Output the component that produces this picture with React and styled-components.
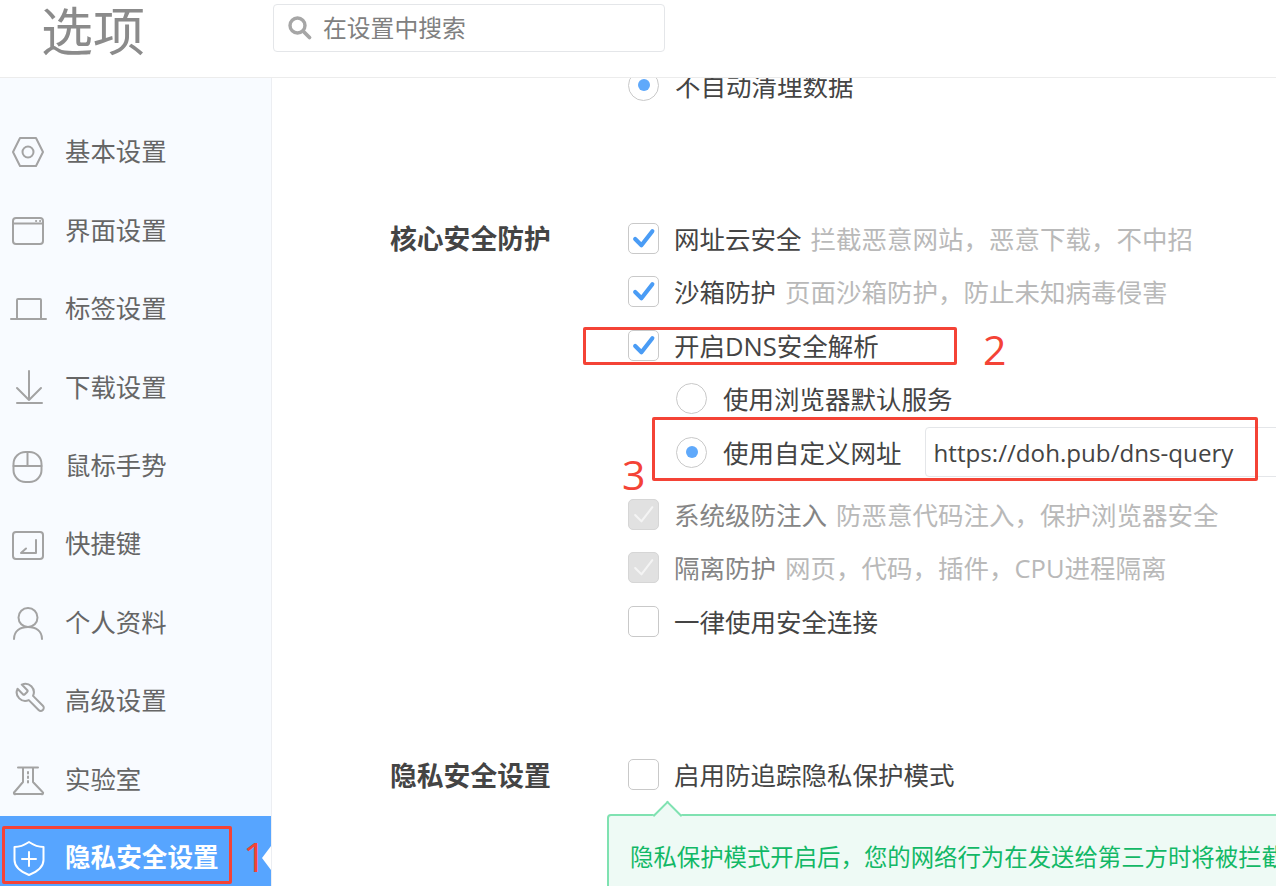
import React from "react";
import styled, { createGlobalStyle } from "styled-components";

const Global = createGlobalStyle`
  html, body { margin: 0; padding: 0; background: #fff; }
  body { font-family: "Open Sans", "Noto Sans CJK SC", sans-serif; }
  * { box-sizing: border-box; }
`;

const COMMA = "\uFF0C";

const Page = styled.div`
  position: relative;
  width: 1276px;
  height: 886px;
  overflow: hidden;
  display: flex;
  flex-direction: column;
`;

const Header = styled.header`
  height: 78px;
  flex: none;
  display: flex;
  align-items: flex-start;
  border-bottom: 1px solid #ececec;
`;

const Title = styled.h1`
  width: 273px;
  flex: none;
  margin: 0;
  padding-left: 41px;
  font-size: 52px;
  line-height: 62px;
  font-weight: 400;
  color: #8b8b8b;
`;

const Search = styled.div`
  margin-top: 4px;
  width: 392px;
  height: 48px;
  display: flex;
  align-items: center;
  gap: 10px;
  padding: 2px 0 0 13px;
  border: 1px solid #e4e6e9;
  border-radius: 4px;
  font-size: 23.8px;
  line-height: 1;
  color: #808080;

  svg {
    margin-bottom: 2px;
  }
`;

const Body = styled.div`
  flex: 1;
  min-height: 0;
  display: flex;
`;

const Sidebar = styled.nav`
  width: 272px;
  flex: none;
  padding-top: 35px;
  background: #f8fbff;
  border-right: 1px solid #eceef2;
  overflow: hidden;
`;

const NavItem = styled.div`
  position: relative;
  height: ${(p) => (p.$active ? "84px" : "78.4px")};
  margin-top: ${(p) => (p.$active ? "-2.4px" : "0")};
  display: flex;
  align-items: center;
  gap: 17px;
  padding-left: 8px;
  font-size: ${(p) => (p.$active ? "25.6px" : "25.4px")};
  line-height: 1;
  font-weight: ${(p) => (p.$active ? 700 : 400)};
  color: ${(p) => (p.$active ? "#fff" : "#666")};
  background: ${(p) => (p.$active ? "#57a5ff" : "transparent")};

  ${(p) =>
    p.$active &&
    `&::after {
      content: "";
      position: absolute;
      right: 0;
      top: 30px;
      border: 12px solid transparent;
      border-left-width: 0;
      border-right: 9px solid #fff;
    }`}
`;

const IconSvg = styled.svg`
  width: 40px;
  height: 40px;
  flex: none;
  fill: none;
  stroke: ${(p) => p.$color || "#a3a3a3"};
  stroke-width: 2;
  stroke-linecap: round;
  stroke-linejoin: round;
`;

const Main = styled.main`
  flex: 1;
  min-width: 0;
  overflow: hidden;
  padding-left: 118px;
`;

const Scrolled = styled.div`
  margin-top: -19.7px;
`;

const Section = styled.section`
  display: grid;
  grid-template-columns: 238px 1fr;
  margin-bottom: ${(p) => p.$after || "0"};
`;

const SectionName = styled.h2`
  margin: 0;
  height: 53.5px;
  padding-top: 3px;
  display: flex;
  align-items: center;
  font-size: 26.8px;
  line-height: 1;
  font-weight: 700;
  color: #444;
  white-space: nowrap;
`;

const Options = styled.div`
  min-width: 0;
`;

const Row = styled.div`
  height: 53.5px;
  padding: 3px 0 0 ${(p) => (p.$sub ? "48px" : "0")};
  display: flex;
  align-items: center;
  margin-bottom: ${(p) => (p.$gap ? "8.5px" : "0")};
  font-size: 25.5px;
  line-height: 1;
  color: ${(p) => (p.$muted ? "#858585" : "#444")};
  white-space: nowrap;
`;

const Box = styled.span`
  width: 31px;
  height: 31px;
  flex: none;
  margin: 0 15px 3px 0;
  display: flex;
  align-items: center;
  justify-content: center;
  border: 1px solid ${(p) => (p.$disabled ? "#d6d6d6" : "#c9c9c9")};
  border-radius: 5px;
  background: ${(p) => (p.$disabled ? "#e1e1e1" : "#fff")};
`;

const CheckMark = styled.svg`
  width: 25px;
  height: 25px;
  fill: none;
  stroke: ${(p) => (p.$disabled ? "#f4f4f4" : "#4a9cf5")};
  stroke-width: ${(p) => (p.$disabled ? 2 : 4)};
  stroke-linecap: round;
  stroke-linejoin: round;
`;

const Radio = styled.span`
  width: 31px;
  height: 31px;
  flex: none;
  margin: 0 16px 3px 0;
  display: flex;
  align-items: center;
  justify-content: center;
  border: 1px solid #c9c9c9;
  border-radius: 50%;
  background: #fff;

  &::after {
    content: "";
    width: 12px;
    height: 12px;
    border-radius: 50%;
    background: ${(p) => (p.$on ? "#5fa9fb" : "transparent")};
  }
`;

const Hint = styled.span`
  margin-left: 9px;
  color: #b9b9b9;
`;

const UrlInput = styled.div`
  flex: none;
  margin: 0 0 3px 23px;
  width: 420px;
  height: 50px;
  display: flex;
  align-items: center;
  padding: 2px 0 0 8px;
  border: 1px solid #e4e6e9;
  border-radius: 4px;
  font-size: 24.15px;
  color: #444;
`;

const Tip = styled.div`
  position: relative;
  margin: 13px 0 0 -21px;
  width: 800px;
  height: 120px;
  padding: 21px 21px;
  border: 2px solid #7fe2b1;
  border-radius: 4px;
  background: #eefaf5;
  font-size: 23.4px;
  line-height: 40px;
  color: #12b866;
  white-space: nowrap;

  &::before {
    content: "";
    position: absolute;
    left: 48px;
    top: -11px;
    width: 19px;
    height: 19px;
    transform: rotate(45deg);
    background: #eefaf5;
    border-top: 2px solid #7fe2b1;
    border-left: 2px solid #7fe2b1;
  }
`;

const Mark = styled.div`
  position: absolute;
  left: ${(p) => p.$l}px;
  top: ${(p) => p.$t}px;
  width: ${(p) => p.$w}px;
  height: ${(p) => p.$h}px;
  border: 3px solid #f44336;
  border-radius: 2px;
  pointer-events: none;
`;

const MarkNumber = styled.span`
  position: absolute;
  left: ${(p) => p.$l}px;
  top: ${(p) => p.$t}px;
  font-family: "Open Sans", sans-serif;
  font-weight: 400;
  font-size: 41px;
  line-height: 42px;
  color: #f44336;
`;

const icons = {
  hex: (
    <>
      <path d="M5 20 12 6h16l7 14-7 14H12z" />
      <circle cx="20" cy="20" r="5.5" />
    </>
  ),
  window: (
    <>
      <rect x="5" y="7" width="30" height="26" rx="3" />
      <path d="M5 12.5h30M28 10h.2M32 10h.2" />
    </>
  ),
  laptop: <path d="M9 30V11a1 1 0 0 1 1-1h22a1 1 0 0 1 1 1v19M3 30h35" />,
  download: <path d="M21 4v29M9 21l12 12 12-12M9 36h25" />,
  mouse: (
    <>
      <rect x="5.5" y="6" width="28" height="30" rx="12" />
      <path d="M5.5 20h28M19.5 6v14" />
    </>
  ),
  key: (
    <>
      <rect x="5" y="8" width="30" height="27" rx="3" />
      <path d="M28 16v13H13l5-4.5" />
    </>
  ),
  person: (
    <>
      <circle cx="20" cy="14.5" r="9.5" />
      <path d="M6 36c0-8 6-12 14-12s14 4 14 12" />
    </>
  ),
  wrench: (
    <g transform="translate(40 0) scale(-1.42 1.42)">
      <path
        strokeWidth="1.45"
        d="M14.7 6.3a1 1 0 0 0 0 1.4l1.6 1.6a1 1 0 0 0 1.4 0l3.77-3.77a6 6 0 0 1-7.94 7.94l-6.91 6.91a2.12 2.12 0 0 1-3-3l6.91-6.91a6 6 0 0 1 7.94-7.94l-3.76 3.76z"
      />
    </g>
  ),
  flask: (
    <>
      <path d="M10 8.500h20M15 8.500V23L6.500 33a1 1 0 0 0 1 2h26a1 1 0 0 0 1-2L25 23V8.500" />
      <path d="M20 13v11" strokeDasharray="1.5 3" />
    </>
  ),
  shield: (
    <>
      <path d="M21 4c4.5 3 9.5 5 14.5 5v13c0 8-7 12-14.500 15C13.500 34 6.500 30 6.500 22V9c5 0 10-2 14.500-5z" />
      <path d="M21 14v14M14 21h14" />
    </>
  ),
};

const Icon = ({ name, color }) => (
  <IconSvg viewBox="0 0 40 40" $color={color} aria-hidden="true">
    {icons[name]}
  </IconSvg>
);

const Check = ({ on, disabled }) => (
  <Box $disabled={disabled}>
    {on && (
      <CheckMark viewBox="0 0 24 24" $disabled={disabled}>
        <path d="M4 12.500l6 6L20.500 5" />
      </CheckMark>
    )}
  </Box>
);

const nav = [
  ["hex", "基本设置"],
  ["window", "界面设置"],
  ["laptop", "标签设置"],
  ["download", "下载设置"],
  ["mouse", "鼠标手势"],
  ["key", "快捷键"],
  ["person", "个人资料"],
  ["wrench", "高级设置"],
  ["flask", "实验室"],
];

export default function App() {
  return (
    <Page>
      <Global />
      <Header>
        <Title>选项</Title>
        <Search>
          <svg width="26" height="26" viewBox="0 0 26 26" fill="none" stroke="#a6a6a6" aria-hidden="true">
            <circle cx="10.5" cy="10.5" r="7.5" strokeWidth="3.4" />
            <path d="M16.5 16.5l6 6" strokeWidth="3.8" strokeLinecap="round" />
          </svg>
          在设置中搜索
        </Search>
      </Header>
      <Body>
        <Sidebar>
          {nav.map(([icon, label]) => (
            <NavItem key={label}>
              <Icon name={icon} />
              {label}
            </NavItem>
          ))}
          <NavItem $active>
            <Icon name="shield" color="#fff" />
            隐私安全设置
          </NavItem>
        </Sidebar>
        <Main>
          <Scrolled>
            <Section $after="99.5px">
              <span />
              <Options>
                <Row>
                  <Radio $on />
                  不自动清理数据
                </Row>
              </Options>
            </Section>
            <Section $after="100px">
              <SectionName>核心安全防护</SectionName>
              <Options>
                <Row>
                  <Check on />
                  网址云安全<Hint>{`拦截恶意网站${COMMA}恶意下载${COMMA}不中招`}</Hint>
                </Row>
                <Row>
                  <Check on />
                  沙箱防护<Hint>{`页面沙箱防护${COMMA}防止未知病毒侵害`}</Hint>
                </Row>
                <Row>
                  <Check on />
                  开启DNS安全解析
                </Row>
                <Row $sub>
                  <Radio />
                  使用浏览器默认服务
                </Row>
                <Row $sub $gap>
                  <Radio $on />
                  使用自定义网址
                  <UrlInput>https://doh.pub/dns-query</UrlInput>
                </Row>
                <Row $muted>
                  <Check on disabled />
                  系统级防注入<Hint>{`防恶意代码注入${COMMA}保护浏览器安全`}</Hint>
                </Row>
                <Row $muted>
                  <Check on disabled />
                  隔离防护<Hint>{`网页${COMMA}代码${COMMA}插件${COMMA}CPU进程隔离`}</Hint>
                </Row>
                <Row>
                  <Check />
                  一律使用安全连接
                </Row>
              </Options>
            </Section>
            <Section>
              <SectionName>隐私安全设置</SectionName>
              <Options>
                <Row>
                  <Check />
                  启用防追踪隐私保护模式
                </Row>
                <Tip>{`隐私保护模式开启后${COMMA}您的网络行为在发送给第三方时将被拦截`}</Tip>
              </Options>
            </Section>
          </Scrolled>
        </Main>
      </Body>
      <Mark $l={2} $t={826} $w={230} $h={58} />
      <MarkNumber $l={243} $t={835}>1</MarkNumber>
      <Mark $l={583} $t={327} $w={374} $h={38} />
      <MarkNumber $l={983} $t={328}>2</MarkNumber>
      <Mark $l={652} $t={417} $w={606} $h={64} />
      <MarkNumber $l={622} $t={453}>3</MarkNumber>
    </Page>
  );
}
